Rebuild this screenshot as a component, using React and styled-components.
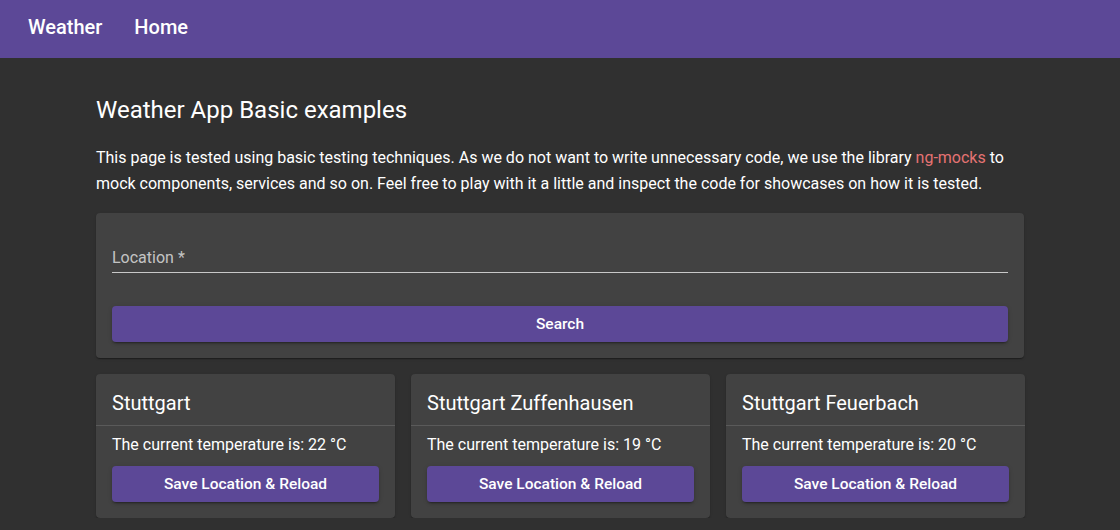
import React from "react";
import styled, { createGlobalStyle } from "styled-components";

const GlobalStyle = createGlobalStyle`
	body {
		margin: 0;
		background: #303030;
		font-family: Roboto, "Helvetica Neue", sans-serif;
		color: #ffffff;
	}
`;

const Toolbar = styled.header`
	display: flex;
	align-items: center;
	height: 58px;
	padding: 0 28px;
	gap: 32px;
	background: #5c4897;
`;

const NavLink = styled.a`
	font-size: 20px;
	font-weight: 500;
	color: #ffffff;
	text-decoration: none;
	margin-top: -4px;
`;

const Main = styled.main`
	max-width: 928px;
	margin: 0 auto;
	padding: 38px 0 0;
`;

const Title = styled.h1`
	margin: 0 0 21px;
	font-size: 24px;
	font-weight: 400;
	line-height: 28px;
`;

const Intro = styled.p`
	margin: 0 0 16px;
	font-size: 16px;
	line-height: 26px;
`;

const Link = styled.a`
	color: #e57373;
	text-decoration: none;
`;

const Card = styled.section`
	background: #424242;
	border-radius: 4px;
	box-shadow: 0 2px 1px -1px rgba(0, 0, 0, 0.2), 0 1px 1px 0 rgba(0, 0, 0, 0.14),
		0 1px 3px 0 rgba(0, 0, 0, 0.12);
`;

const SearchCard = styled(Card)`
	padding: 28px 16px 16px;
	margin-bottom: 16px;
`;

const Field = styled.label`
	display: block;
	padding: 8px 0 5px;
	border-bottom: 1px solid #c8c8c8;
	font-size: 16px;
	line-height: 18px;
	color: rgba(255, 255, 255, 0.7);
	margin-bottom: 33px;
`;

const Button = styled.button`
	display: block;
	width: 100%;
	height: 36px;
	border: none;
	border-radius: 4px;
	background: #5c4897;
	color: #ffffff;
	font-family: Roboto, sans-serif;
	font-size: 15.5px;
	font-weight: 500;
	box-shadow: 0 3px 1px -2px rgba(0, 0, 0, 0.2), 0 2px 2px 0 rgba(0, 0, 0, 0.14),
		0 1px 5px 0 rgba(0, 0, 0, 0.12);
	cursor: pointer;
`;

const Grid = styled.div`
	display: grid;
	grid-template-columns: repeat(3, 1fr);
	gap: 16px;
`;

const CityHead = styled.h2`
	margin: 0;
	padding: 17px 16px 10px;
	font-size: 20px;
	font-weight: 400;
	line-height: 24px;
	border-bottom: 1px solid #5a5a5a;
`;

const CityBody = styled.div`
	padding: 9px 16px 16px;
`;

const Temp = styled.p`
	margin: 0 0 11px;
	font-size: 16px;
	line-height: 20px;
`;

const SaveButton = styled(Button)`
	width: 267px;
`;

const cities = [
	{ name: "Stuttgart", temp: 22 },
	{ name: "Stuttgart Zuffenhausen", temp: 19 },
	{ name: "Stuttgart Feuerbach", temp: 20 },
];

function App() {
	return (
		<>
			<GlobalStyle />
			<Toolbar>
				<NavLink href="#">Weather</NavLink>
				<NavLink href="#">Home</NavLink>
			</Toolbar>
			<Main>
				<Title>Weather App Basic examples</Title>
				<Intro>
					This page is tested using basic testing techniques. As we do not want
					to write unnecessary code, we use the library{" "}
					<Link href="#">ng-mocks</Link> to mock components, services and so on.
					Feel free to play with it a little and inspect the code for showcases
					on how it is tested.
				</Intro>
				<SearchCard>
					<Field>Location *</Field>
					<Button>Search</Button>
				</SearchCard>
				<Grid>
					{cities.map((city) => (
						<Card key={city.name}>
							<CityHead>{city.name}</CityHead>
							<CityBody>
								<Temp>The current temperature is: {city.temp} °C</Temp>
								<SaveButton>Save Location &amp; Reload</SaveButton>
							</CityBody>
						</Card>
					))}
				</Grid>
			</Main>
		</>
	);
}

export default App;
